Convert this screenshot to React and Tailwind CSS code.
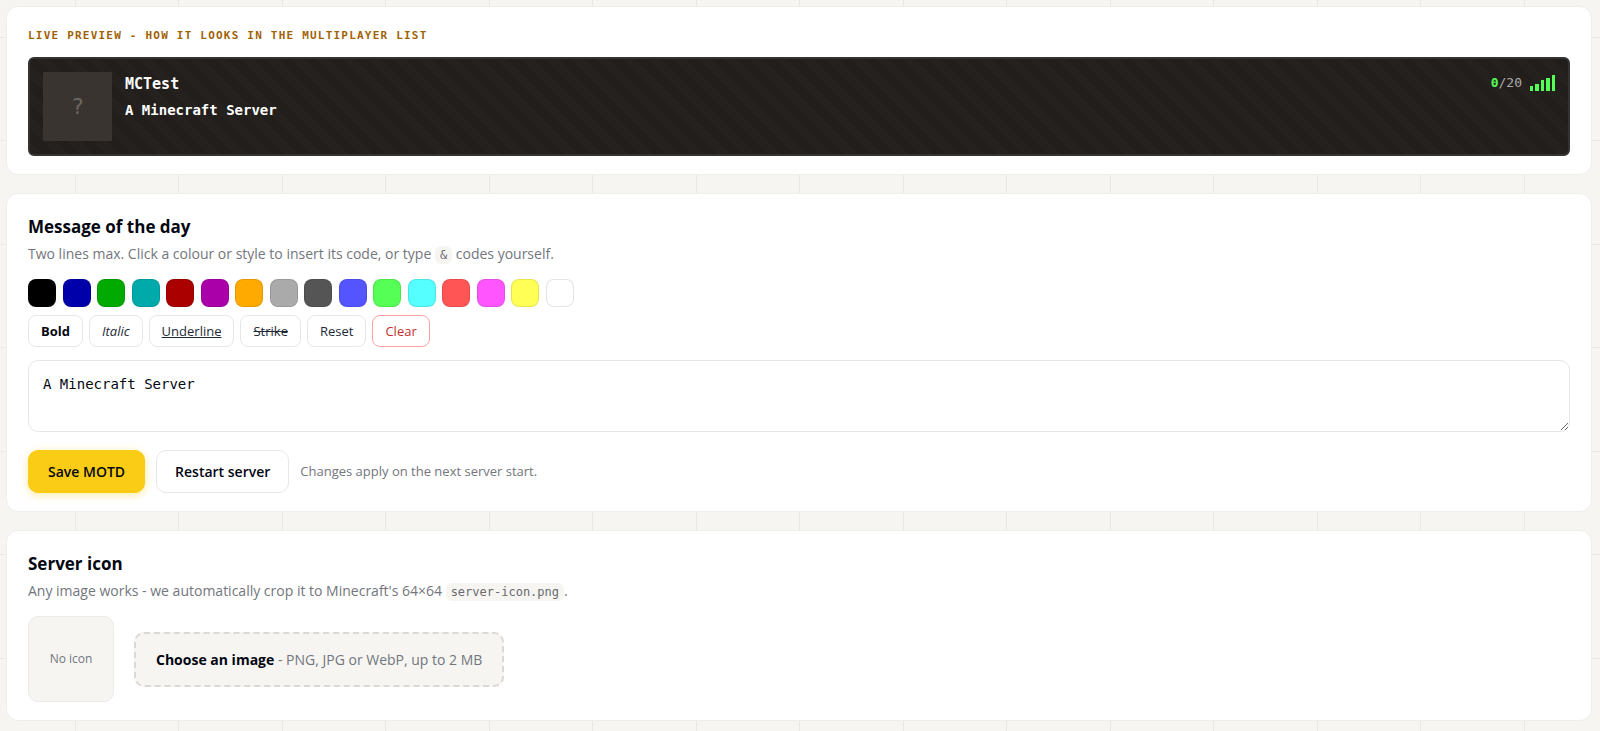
import React, { useState } from "react";

const colours = [
  { name: "Black", code: "&0", bg: "bg-[#000000]" },
  { name: "Dark blue", code: "&1", bg: "bg-[#0000aa]" },
  { name: "Dark green", code: "&2", bg: "bg-[#00aa00]" },
  { name: "Dark aqua", code: "&3", bg: "bg-[#00aaaa]" },
  { name: "Dark red", code: "&4", bg: "bg-[#aa0000]" },
  { name: "Dark purple", code: "&5", bg: "bg-[#aa00aa]" },
  { name: "Gold", code: "&6", bg: "bg-[#ffaa00]" },
  { name: "Gray", code: "&7", bg: "bg-[#aaaaaa]" },
  { name: "Dark gray", code: "&8", bg: "bg-[#555555]" },
  { name: "Blue", code: "&9", bg: "bg-[#5555ff]" },
  { name: "Green", code: "&a", bg: "bg-[#55ff55]" },
  { name: "Aqua", code: "&b", bg: "bg-[#55ffff]" },
  { name: "Red", code: "&c", bg: "bg-[#ff5555]" },
  { name: "Light purple", code: "&d", bg: "bg-[#ff55ff]" },
  { name: "Yellow", code: "&e", bg: "bg-[#ffff55]" },
  { name: "White", code: "&f", bg: "bg-[#ffffff]" },
];

const styles = [
  { label: "Bold", code: "&l", cls: "font-bold text-gray-950 border-gray-200" },
  { label: "Italic", code: "&o", cls: "italic text-gray-800 border-gray-200" },
  { label: "Underline", code: "&n", cls: "underline text-gray-800 border-gray-200" },
  { label: "Strike", code: "&m", cls: "line-through text-gray-800 border-gray-200" },
  { label: "Reset", code: "&r", cls: "text-gray-800 border-gray-200" },
];

const Card = ({ children }) => (
  <section className="rounded-xl border border-[#efeeeb] bg-white px-[21px] pt-[21px] pb-[18px]">
    {children}
  </section>
);

const Code = ({ children }) => (
  <code className="rounded-md bg-[#f6f5f2] px-[5px] py-[2px] font-['DejaVu_Sans_Mono',monospace] text-[12px] text-[#686a70]">
    {children}
  </code>
);

const SignalBars = () => (
  <svg width="25" height="16" viewBox="0 0 25 16" fill="#55ff55" aria-hidden="true">
    <rect x="0" y="11" width="3" height="5" />
    <rect x="5" y="9" width="4" height="7" />
    <rect x="11" y="5" width="3" height="11" />
    <rect x="16" y="3" width="4" height="13" />
    <rect x="22" y="0" width="3" height="16" />
  </svg>
);

const ServerPreview = ({ motd }) => (
  <Card>
    <h2 className="mb-[13px] font-['DejaVu_Sans_Mono',monospace] text-[11px] leading-4 font-bold tracking-[0.11em] text-[#a16207] uppercase">
      Live preview - how it looks in the multiplayer list
    </h2>
    <div className="flex gap-[13px] rounded-md border-2 border-[#353331] bg-[repeating-linear-gradient(45deg,#25211e_0px,#25211e_9px,#221e1b_9px,#221e1b_18px)] p-[13px] font-['DejaVu_Sans_Mono',monospace]">
      <div className="flex size-[69px] items-center justify-center bg-[#3a3431] text-[22px] text-[#6b6560]">
        ?
      </div>
      <div className="flex-1 text-white">
        <div className="text-[15px] leading-6 font-bold">MCTest</div>
        <p className="mt-1 text-[14px] leading-5 font-bold whitespace-pre-wrap">{motd}</p>
      </div>
      <div className="flex h-[22px] items-center gap-2 text-[13px] text-[#aaaaaa]">
        <span>
          <b className="text-[#55ff55]">0</b>/20
        </span>
        <SignalBars />
      </div>
    </div>
  </Card>
);

const MotdEditor = ({ motd, setMotd }) => {
  const insert = (code) => setMotd(motd + code);

  return (
    <Card>
      <h2 className="text-[17px] leading-6 font-bold text-gray-950">
        <label htmlFor="motd">Message of the day</label>
      </h2>
      <p className="mt-[3px] text-[14px] leading-6 text-[#73767d]">
        Two lines max. Click a colour or style to insert its code, or type <Code>&amp;</Code> codes yourself.
      </p>

      <div className="mt-3 flex max-w-[546px] flex-wrap justify-between">
        {colours.map((c) => (
          <button
            key={c.code}
            type="button"
            aria-label={c.name}
            onClick={() => insert(c.code)}
            className={`size-7 rounded-lg border border-black/10 ${c.bg}`}
          />
        ))}
      </div>

      <div className="mt-2 flex flex-wrap gap-[6px] text-[13px] leading-[18px]">
        {styles.map((s) => (
          <button
            key={s.code}
            type="button"
            onClick={() => insert(s.code)}
            className={`rounded-lg border bg-white px-3 py-[6px] ${s.cls}`}
          >
            {s.label}
          </button>
        ))}
        <button
          type="button"
          onClick={() => setMotd("")}
          className="rounded-lg border border-red-300 bg-white px-3 py-[6px] text-[#c53030]"
        >
          Clear
        </button>
      </div>

      <textarea
        id="motd"
        rows={2}
        value={motd}
        onChange={(e) => setMotd(e.target.value)}
        className="mt-[13px] block w-full resize-y rounded-[10px] border border-gray-200 bg-white px-[14px] py-3 font-['DejaVu_Sans_Mono',monospace] text-[14px] leading-[23px] text-gray-950"
      />

      <div className="mt-[18px] flex flex-wrap items-center gap-[11px]">
        <button
          type="button"
          className="rounded-[10px] border border-[#facc15] bg-[#facc15] px-[19px] py-[10px] text-[14px] leading-[21px] font-semibold text-gray-950 shadow-[0_2px_8px_rgba(250,204,21,0.4)]"
        >
          Save MOTD
        </button>
        <button
          type="button"
          className="rounded-[10px] border border-gray-200 bg-white px-[18px] py-[10px] text-[14px] leading-[21px] font-semibold text-gray-950"
        >
          Restart server
        </button>
        <span className="text-[13px] text-[#73767d]">Changes apply on the next server start.</span>
      </div>
    </Card>
  );
};

const IconPicker = () => (
  <Card>
    <h2 className="text-[17px] leading-6 font-bold text-gray-950">Server icon</h2>
    <p className="mt-[3px] text-[14px] leading-6 text-[#73767d]">
      Any image works - we automatically crop it to Minecraft's 64×64 <Code>server-icon.png</Code>.
    </p>
    <div className="mt-3 flex items-center gap-5">
      <div className="flex size-[86px] items-center justify-center rounded-[10px] border border-[#ecebe8] bg-[#f6f5f2] text-[12px] text-[#73767d]">
        No icon
      </div>
      <label className="cursor-pointer rounded-[10px] border-2 border-dashed border-[#dad9d7] bg-[#f6f5f2] px-5 py-[15px] text-[14px] leading-[21px] text-[#73767d]">
        <b className="text-gray-950">Choose an image</b> - PNG, JPG or WebP, up to 2 MB
        <input type="file" accept="image/png,image/jpeg,image/webp" className="sr-only" />
      </label>
    </div>
  </Card>
);

const App = () => {
  const [motd, setMotd] = useState("A Minecraft Server");

  return (
    <main className="flex min-h-screen flex-col gap-[18px] bg-[#f6f5f2] bg-[linear-gradient(90deg,transparent_75px,#e9e8e5_75px,#e9e8e5_76px,transparent_76px,transparent_178px,#e9e8e5_178px,#e9e8e5_179px,transparent_179px),linear-gradient(transparent_37px,#e9e8e5_37px,#e9e8e5_38px,transparent_38px,transparent_140px,#e9e8e5_140px,#e9e8e5_141px,transparent_141px)] bg-[length:207px_207px] pt-[6px] pr-2 pb-[11px] pl-[6px] font-['Open_Sans',sans-serif]">
      <ServerPreview motd={motd} />
      <MotdEditor motd={motd} setMotd={setMotd} />
      <IconPicker />
    </main>
  );
};

export default App;
